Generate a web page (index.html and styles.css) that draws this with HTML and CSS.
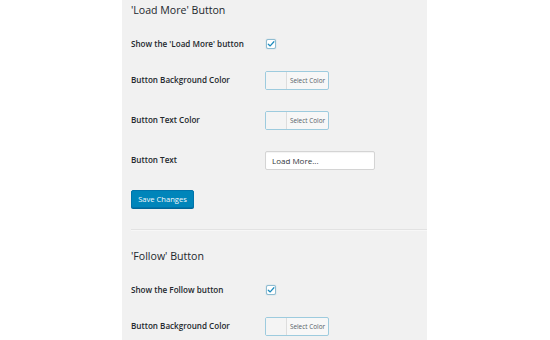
FILE: index.html
```html
<!DOCTYPE html>
<html>
<head>
<meta charset="utf-8">
<link rel="stylesheet" href="styles.css">
</head>
<body>
<div class="panel">
  <section class="section">
    <h2 class="heading">'Load More' Button</h2>
    <div class="form">
      <div class="row row-check">
        <div class="label">Show the 'Load More' button</div>
        <div class="control"><span class="check"><svg viewBox="0 0 10 10" width="8" height="8"><path d="M1.6 5.2 L4 7.4 L8.6 2.2" fill="none" stroke="#1e8cbe" stroke-width="1.6" stroke-linecap="round" stroke-linejoin="round"/></svg></span></div>
      </div>
      <div class="row">
        <div class="label">Button Background Color</div>
        <div class="control"><span class="picker"><span class="swatch"></span><span class="picker-text">Select Color</span></span></div>
      </div>
      <div class="row">
        <div class="label">Button Text Color</div>
        <div class="control"><span class="picker"><span class="swatch"></span><span class="picker-text">Select Color</span></span></div>
      </div>
      <div class="row">
        <div class="label">Button Text</div>
        <div class="control"><span class="input">Load More...</span></div>
      </div>
    </div>
    <div class="actions"><span class="btn">Save Changes</span></div>
  </section>
  <hr class="sep">
  <section class="section section-2">
    <h2 class="heading">'Follow' Button</h2>
    <div class="form">
      <div class="row row-check">
        <div class="label">Show the Follow button</div>
        <div class="control"><span class="check"><svg viewBox="0 0 10 10" width="8" height="8"><path d="M1.6 5.2 L4 7.4 L8.6 2.2" fill="none" stroke="#1e8cbe" stroke-width="1.6" stroke-linecap="round" stroke-linejoin="round"/></svg></span></div>
      </div>
      <div class="row">
        <div class="label">Button Background Color</div>
        <div class="control"><span class="picker"><span class="swatch"></span><span class="picker-text">Select Color</span></span></div>
      </div>
    </div>
  </section>
</div>
</body>
</html>
```
FILE: styles.css
```css
html, body {
  margin: 0;
  padding: 0;
  background: #ffffff;
  height: 100%;
  overflow: hidden;
}
body {
  font-family: "Open Sans", "Noto Sans", sans-serif;
  color: #23282d;
}
.panel {
  width: 305px;
  margin-left: 122px;
  min-height: 340px;
  background: #f1f1f1;
  display: flex;
  flex-direction: column;
}
.section {
  padding-left: 9px;
  display: flex;
  flex-direction: column;
}
.heading {
  margin: 0 0 8px 0;
  font-size: 10.6px;
  line-height: 20px;
  font-weight: 400;
  color: #23282d;
}
.form {
  display: flex;
  flex-direction: column;
}
.row {
  display: grid;
  grid-template-columns: 134px 1fr;
  align-items: center;
  padding: 10px 0;
  height: 20px;
}
.row-check {
  height: 12px;
}
.label {
  font-size: 8.1px;
  font-weight: 600;
  line-height: 12px;
  color: #23282d;
}
.control {
  display: flex;
  align-items: center;
}
.check {
  width: 10px;
  height: 10px;
  box-sizing: border-box;
  border: 1px solid #8fbcd1;
  border-radius: 2px;
  background: #fff;
  display: flex;
  align-items: center;
  justify-content: center;
  margin-left: 1px;
  box-shadow: 0 0 1px rgba(30,140,190,0.5);
}
.picker {
  display: flex;
  width: 64px;
  height: 19px;
  box-sizing: border-box;
  border: 1px solid #9dcbde;
  border-radius: 2px;
  background: #f7f7f7;
  overflow: hidden;
}
.swatch {
  width: 20px;
  border-right: 1px solid #dddddd;
  background: #f4f4f4;
}
.picker-text {
  flex: 1;
  font-size: 6.4px;
  color: #555d66;
  display: flex;
  align-items: center;
  justify-content: center;
}
.input {
  display: flex;
  align-items: center;
  width: 110px;
  height: 19px;
  box-sizing: border-box;
  border: 1px solid #d4d4d4;
  border-radius: 2px;
  background: #ffffff;
  padding-left: 6px;
  font-size: 8px;
  color: #32373c;
  box-shadow: inset 0 1px 1px rgba(0,0,0,0.05);
}
.actions {
  display: flex;
  margin-top: 10px;
}
.btn {
  display: flex;
  align-items: center;
  justify-content: center;
  width: 63px;
  height: 18px;
  box-sizing: border-box;
  background: #0085ba;
  border: 1px solid #0073aa;
  border-radius: 2px;
  color: #f4f9fc;
  font-size: 7.6px;
  box-shadow: 0 1px 0 #006799;
}
.sep {
  margin: 21px 0 0 9px;
  border: 0;
  height: 1px;
  background: #e2e2e2;
  border-bottom: 1px solid #f7f7f7;
}
.section-2 {
  margin-top: 15px;
}
```
